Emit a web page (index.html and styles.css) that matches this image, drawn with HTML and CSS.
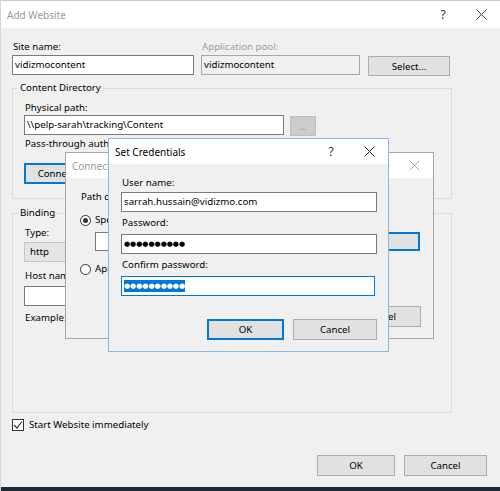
FILE: index.html
```html
<!DOCTYPE html>
<html lang="en">
<head>
    <meta charset="UTF-8">
    <meta name="viewport" content="width=device-width, initial-scale=1.0">
    <title>Add Website</title>
    <link rel="stylesheet" href="styles.css">
</head>
<body>

<div class="window">
    <div class="titlebar">
        <span class="title inactive">Add Website</span>
        <span class="caption-btn">?</span>
        <span class="caption-btn">
            <svg width="11" height="11" viewBox="0 0 11 11"><path d="M0.5 0.5 L10.5 10.5 M10.5 0.5 L0.5 10.5" stroke="#444" stroke-width="1"/></svg>
        </span>
    </div>

    <div class="content">
        <div class="site-row">
            <div class="field site-name">
                <label>Site name:</label>
                <div class="textbox">vidizmocontent</div>
            </div>
            <div class="field app-pool">
                <label class="disabled">Application pool:</label>
                <div class="textbox readonly">vidizmocontent</div>
            </div>
            <button class="btn select-btn">Select...</button>
        </div>

        <fieldset class="group content-dir">
            <legend>Content Directory</legend>
            <label>Physical path:</label>
            <div class="path-row">
                <div class="textbox path-box">\\pelp-sarah\tracking\Content</div>
                <button class="btn browse-btn">...</button>
            </div>
            <label class="pass-label">Pass-through authentication</label>
            <button class="btn focused connect-btn">Connect As...</button>
        </fieldset>

        <fieldset class="group binding">
            <legend>Binding</legend>
            <label>Type:</label>
            <div class="combo">http</div>
            <label class="host-label">Host name:</label>
            <div class="textbox host-box"></div>
            <label class="example-label">Example: www.contoso.com</label>
        </fieldset>

        <div class="check-row">
            <span class="checkbox">
                <svg width="10" height="10" viewBox="0 0 10 10"><path d="M1 5 L4 8 L9 1.5" fill="none" stroke="#333" stroke-width="1.2"/></svg>
            </span>
            <span>Start Website immediately</span>
        </div>

        <div class="footer">
            <button class="btn ok-btn">OK</button>
            <button class="btn cancel-btn">Cancel</button>
        </div>
    </div>

    <div class="screen-edge"></div>

    <!-- Connect As dialog, mostly hidden behind Set Credentials -->
    <div class="dialog connect-as">
        <div class="titlebar small">
            <span class="title inactive">Connect As</span>
            <span class="caption-btn">
                <svg width="11" height="11" viewBox="0 0 11 11"><path d="M0.5 0.5 L10.5 10.5 M10.5 0.5 L0.5 10.5" stroke="#aaa" stroke-width="1"/></svg>
            </span>
        </div>
        <div class="dialog-body">
            <label>Path credentials:</label>
            <div class="radio-row first">
                <span class="radio checked"></span>
                <span>Specific user:</span>
            </div>
            <div class="user-row">
                <div class="textbox user-box"></div>
                <button class="btn focused set-btn">Set...</button>
            </div>
            <div class="radio-row second">
                <span class="radio"></span>
                <span>Application user</span>
            </div>
            <div class="dialog-footer">
                <button class="btn">OK</button>
                <button class="btn">Cancel</button>
            </div>
        </div>
    </div>

    <!-- Set Credentials dialog -->
    <div class="dialog credentials">
        <div class="titlebar small">
            <span class="title">Set Credentials</span>
            <span class="caption-btn">?</span>
            <span class="caption-btn">
                <svg width="11" height="11" viewBox="0 0 11 11"><path d="M0.5 0.5 L10.5 10.5 M10.5 0.5 L0.5 10.5" stroke="#222" stroke-width="1"/></svg>
            </span>
        </div>
        <div class="dialog-body">
            <label>User name:</label>
            <div class="textbox wide">sarrah.hussain@vidizmo.com</div>
            <label class="cred-label">Password:</label>
            <div class="textbox wide dots">&#9679;&#9679;&#9679;&#9679;&#9679;&#9679;&#9679;&#9679;&#9679;&#9679;</div>
            <label class="cred-label">Confirm password:</label>
            <div class="textbox wide dots active"><span class="selected">&#9679;&#9679;&#9679;&#9679;&#9679;&#9679;&#9679;&#9679;&#9679;&#9679;</span></div>
            <div class="dialog-footer">
                <button class="btn focused cred-ok">OK</button>
                <button class="btn cred-cancel">Cancel</button>
            </div>
        </div>
    </div>
</div>

</body>
</html>
```

FILE: styles.css
```css
body {
    margin: 0;
    font-family: "Noto Sans", sans-serif;
    font-size: 9.7px;
    color: #000;
    background-color: #fff;
}

.window {
    position: relative;
    width: 500px;
    height: 491px;
    box-sizing: border-box;
    border-top: 1px solid #c9c9c9;
    border-left: 1px solid #d6d6d6;
    background-color: #f0f0f0;
    display: flex;
    flex-direction: column;
    overflow: hidden;
}

.titlebar {
    height: 27px;
    flex: none;
    background-color: #fff;
    display: flex;
    align-items: center;
    padding-left: 6px;
}

.titlebar.small {
    height: 25px;
}

.title {
    flex: 1;
    font-size: 10px;
    white-space: nowrap;
    overflow: hidden;
}

.title.inactive {
    color: #999;
}

.caption-btn {
    width: 38px;
    display: flex;
    justify-content: center;
    align-items: center;
    font-size: 12px;
    color: #333;
}

.content {
    padding: 12px 13px 0 11px;
}

label {
    display: block;
    line-height: 14px;
    height: 14px;
    padding-left: 1px;
    white-space: nowrap;
}

label.disabled {
    color: #9d9d9d;
}

.textbox {
    box-sizing: border-box;
    height: 20px;
    line-height: 18px;
    padding-left: 2px;
    border: 1px solid #7a7a7a;
    background-color: #fff;
    white-space: nowrap;
    overflow: hidden;
}

.textbox.readonly {
    background-color: #f0f0f0;
    border-color: #a8a8a8;
}

.btn {
    box-sizing: border-box;
    height: 21px;
    padding: 0;
    font-family: "Noto Sans", sans-serif;
    font-size: 9.7px;
    color: #000;
    background-color: #e1e1e1;
    border: 1px solid #adadad;
}

.btn.focused {
    border: 2px solid #0078d7;
}

/* first row */
.site-row {
    display: flex;
    align-items: flex-end;
}

.field label + .textbox {
    margin-top: 1px;
}

.site-name {
    width: 182px;
    margin-right: 7px;
}

.app-pool {
    width: 159px;
    margin-right: 8px;
}

.select-btn {
    width: 82px;
    height: 20px;
    margin-bottom: -1px;
}

/* groups */
.group {
    box-sizing: border-box;
    width: 440px;
    margin: 6px 0 0 0;
    padding: 6px 0 14px 11px;
    border: 1px solid #dcdcdc;
    min-width: 0;
}

.group legend {
    padding: 0 2px;
    margin-left: -6px;
    line-height: 14px;
}

.path-row {
    display: flex;
    align-items: flex-start;
    gap: 6px;
}

.path-box {
    width: 260px;
}

.browse-btn {
    width: 26px;
    height: 20px;
    margin-top: 1px;
    background-color: #cccccc;
    border-color: #bfbfbf;
    color: #8a8a8a;
    font-size: 8px;
}

.pass-label {
    margin-top: 1px;
}

.connect-btn {
    width: 86px;
    margin-top: 12px;
}

.binding {
    margin-top: 7px;
    padding-bottom: 87px;
}

.combo {
    box-sizing: border-box;
    width: 120px;
    height: 20px;
    margin-top: 2px;
    line-height: 18px;
    padding-left: 5px;
    background-color: #e5e5e5;
    border: 1px solid #c4c4c4;
}

.host-label {
    margin-top: 7px;
}

.host-box {
    width: 400px;
    margin-top: 3px;
}

.example-label {
    margin-top: 5px;
}

.check-row {
    display: flex;
    align-items: center;
    gap: 5px;
    margin-top: 5px;
    line-height: 14px;
}

.checkbox {
    box-sizing: border-box;
    width: 12px;
    height: 12px;
    border: 1px solid #333;
    background-color: #fff;
    display: flex;
    justify-content: center;
    align-items: center;
}

.footer {
    display: flex;
    justify-content: flex-end;
    gap: 9px;
    margin-top: 23px;
}

.ok-btn {
    width: 78px;
}

.cancel-btn {
    width: 83px;
}

.screen-edge {
    margin-top: auto;
    height: 4px;
    background-color: #1d2a38;
}

/* dialogs over the main window */
.dialog {
    position: absolute;
    box-sizing: border-box;
    background-color: #f0f0f0;
    display: flex;
    flex-direction: column;
}

.connect-as {
    left: 64px;
    top: 151px;
    width: 369px;
    height: 187px;
    border: 1px solid #a6a6a6;
}

.connect-as .dialog-body {
    padding: 12px 12px 0 14px;
}

.radio-row {
    display: flex;
    align-items: center;
    gap: 4px;
    line-height: 14px;
}

.radio-row.first {
    margin-top: 9px;
}

.radio-row.second {
    margin-top: 11px;
}

.radio {
    box-sizing: border-box;
    width: 11px;
    height: 11px;
    border: 1px solid #333;
    border-radius: 50%;
    background-color: #fff;
    display: flex;
    justify-content: center;
    align-items: center;
}

.radio.checked::after {
    content: "";
    width: 5px;
    height: 5px;
    border-radius: 50%;
    background-color: #333;
}

.user-row {
    display: flex;
    gap: 10px;
    margin: 5px 0 0 15px;
}

.user-box {
    width: 205px;
    height: 19px;
}

.set-btn {
    width: 110px;
    height: 19px;
}

.dialog-footer {
    display: flex;
    justify-content: flex-end;
    gap: 9px;
}

.connect-as .dialog-footer {
    margin-top: 30px;
}

.connect-as .dialog-footer .btn {
    width: 80px;
}

.credentials {
    left: 107px;
    top: 137px;
    width: 281px;
    height: 214px;
    border: 1px solid #86b9e9;
}

.credentials .titlebar .title {
    color: #000;
}

.credentials .dialog-body {
    padding: 12px 11px 0 12px;
}

.textbox.wide {
    width: 256px;
    margin-top: 2px;
}

.cred-label {
    margin-top: 4px;
}

.cred-label + .textbox.wide {
    margin-top: 4px;
}

.dots {
    font-family: "DejaVu Sans", sans-serif;
    font-size: 7px;
}

.textbox.active {
    width: 254px;
    border-color: #0078d7;
}

.selected {
    background-color: #0078d7;
    color: #fff;
    padding: 2px 0;
}

.credentials .dialog-footer {
    margin-top: 23px;
}

.cred-ok {
    width: 77px;
}

.cred-cancel {
    width: 84px;
}
```
